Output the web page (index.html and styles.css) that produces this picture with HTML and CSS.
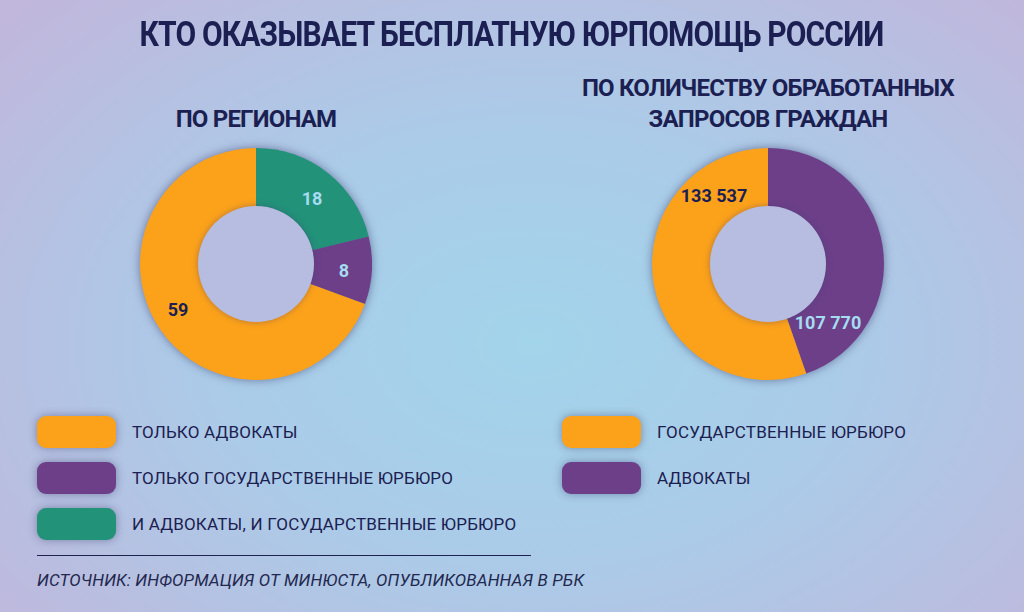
FILE: index.html
```html
<!DOCTYPE html>
<html lang="ru">
<head>
<meta charset="utf-8">
<title>Кто оказывает бесплатную юрпомощь России</title>
<link rel="stylesheet" href="styles.css">
</head>
<body>
<main class="page">
  <h1 class="title"><span class="title-text">КТО ОКАЗЫВАЕТ БЕСПЛАТНУЮ ЮРПОМОЩЬ РОССИИ</span></h1>
  <section class="charts">
    <div class="chart">
      <h2 class="chart-title">ПО РЕГИОНАМ</h2>
      <svg class="donut" viewBox="-129 -129 258 258" width="258" height="258">
        <g class="slices">
          <path class="c-green" d="M0,0 L0,-116 A116,116 0 0 1 112.67,-27.60 Z"/>
          <path class="c-purple" d="M0,0 L112.67,-27.60 A116,116 0 0 1 108.92,39.90 Z"/>
          <path class="c-orange" d="M0,0 L108.92,39.90 A116,116 0 1 1 0,-116 Z"/>
        </g>
        <circle class="hole" cx="0" cy="0" r="58"/>
        <text class="lbl lbl-light" x="56" y="-59">18</text>
        <text class="lbl lbl-light" x="88" y="13">8</text>
        <text class="lbl lbl-dark" x="-78" y="52">59</text>
      </svg>
    </div>
    <div class="chart">
      <h2 class="chart-title">ПО КОЛИЧЕСТВУ ОБРАБОТАННЫХ<br>ЗАПРОСОВ ГРАЖДАН</h2>
      <svg class="donut" viewBox="-129 -129 258 258" width="258" height="258">
        <g class="slices">
          <path class="c-purple" d="M0,0 L0,-116 A116,116 0 0 1 38.21,109.53 Z"/>
          <path class="c-orange" d="M0,0 L38.21,109.53 A116,116 0 1 1 0,-116 Z"/>
        </g>
        <circle class="hole" cx="0" cy="0" r="58"/>
        <text class="lbl lbl-dark" x="-54" y="-62">133 537</text>
        <text class="lbl lbl-light" x="60" y="65">107 770</text>
      </svg>
    </div>
  </section>
  <section class="legends">
    <ul class="legend">
      <li class="legend-item"><span class="swatch sw-orange"></span>ТОЛЬКО АДВОКАТЫ</li>
      <li class="legend-item"><span class="swatch sw-purple"></span>ТОЛЬКО ГОСУДАРСТВЕННЫЕ ЮРБЮРО</li>
      <li class="legend-item"><span class="swatch sw-green"></span>И АДВОКАТЫ, И ГОСУДАРСТВЕННЫЕ ЮРБЮРО</li>
    </ul>
    <ul class="legend">
      <li class="legend-item"><span class="swatch sw-orange"></span>ГОСУДАРСТВЕННЫЕ ЮРБЮРО</li>
      <li class="legend-item"><span class="swatch sw-purple"></span>АДВОКАТЫ</li>
    </ul>
  </section>
  <footer class="footer">
    <div class="rule"></div>
    <p class="source">ИСТОЧНИК: ИНФОРМАЦИЯ ОТ МИНЮСТА, ОПУБЛИКОВАННАЯ В РБК</p>
  </footer>
</main>
</body>
</html>
```
FILE: styles.css
```css
* { box-sizing: border-box; }
html, body { margin: 0; padding: 0; }
body {
  width: 1024px;
  height: 612px;
  overflow: hidden;
  font-family: Roboto, "Liberation Sans", sans-serif;
  color: #1c2050;
  background: radial-gradient(ellipse 70% 80% at 52% 56%, #a2d4ea 0%, #abcbe8 45%, #b9bee0 80%, #c1b6dc 100%);
}
.page {
  width: 1024px;
  height: 612px;
  padding-top: 15px;
  display: flex;
  flex-direction: column;
}
.title {
  margin: 0;
  font-size: 35px;
  line-height: 40px;
  font-weight: 700;
  text-align: center;
  white-space: nowrap;
  color: #1b1f52;
}
.title-text {
  display: inline-block;
  letter-spacing: -1px;
  transform: scaleX(0.858);
  transform-origin: center;
}
.charts {
  display: flex;
  margin-top: 18px;
}
.chart {
  width: 512px;
  display: flex;
  flex-direction: column;
  align-items: center;
}
.chart-title {
  margin: 0;
  height: 62px;
  display: flex;
  align-items: flex-end;
  justify-content: center;
  text-align: center;
  font-size: 24px;
  line-height: 31px;
  font-weight: 700;
  letter-spacing: -0.8px;
  color: #1b1f52;
}
.donut { display: block; overflow: visible; }
.slices { filter: drop-shadow(0 0 5px rgba(50, 50, 100, 0.55)); }
.c-orange { fill: #fca11a; }
.c-purple { fill: #6c3f88; }
.c-green { fill: #229279; }
.hole { fill: #b7bde1; filter: drop-shadow(0 0 3px rgba(60, 60, 110, 0.4)); }
.lbl {
  font-family: Roboto, "Liberation Sans", sans-serif;
  font-size: 18px;
  font-weight: 700;
  text-anchor: middle;
}
.lbl-light { fill: #a6dcf0; }
.lbl-dark { fill: #1b1f52; }
.legends {
  display: grid;
  grid-template-columns: 525px 1fr;
  padding-left: 37px;
  margin-top: 23px;
}
.legend {
  list-style: none;
  margin: 0;
  padding: 0;
  display: flex;
  flex-direction: column;
  gap: 14px;
}
.legend-item {
  display: flex;
  align-items: center;
  height: 32px;
  font-size: 17px;
  letter-spacing: 0.2px;
  color: #1c2050;
}
.swatch {
  width: 79px;
  height: 32px;
  border-radius: 9px;
  margin-right: 16px;
  box-shadow: 0 0 8px rgba(50, 50, 100, 0.45);
  flex: none;
}
.sw-orange { background: #fca11a; }
.sw-purple { background: #6c3f88; }
.sw-green { background: #229279; }
.footer {
  padding-left: 37px;
  margin-top: 15px;
}
.rule {
  width: 494px;
  height: 1px;
  background: #1f2350;
}
.source {
  margin: 14px 0 0;
  font-size: 17px;
  line-height: 20px;
  font-style: italic;
  letter-spacing: 0.15px;
  color: #23284f;
}
```
